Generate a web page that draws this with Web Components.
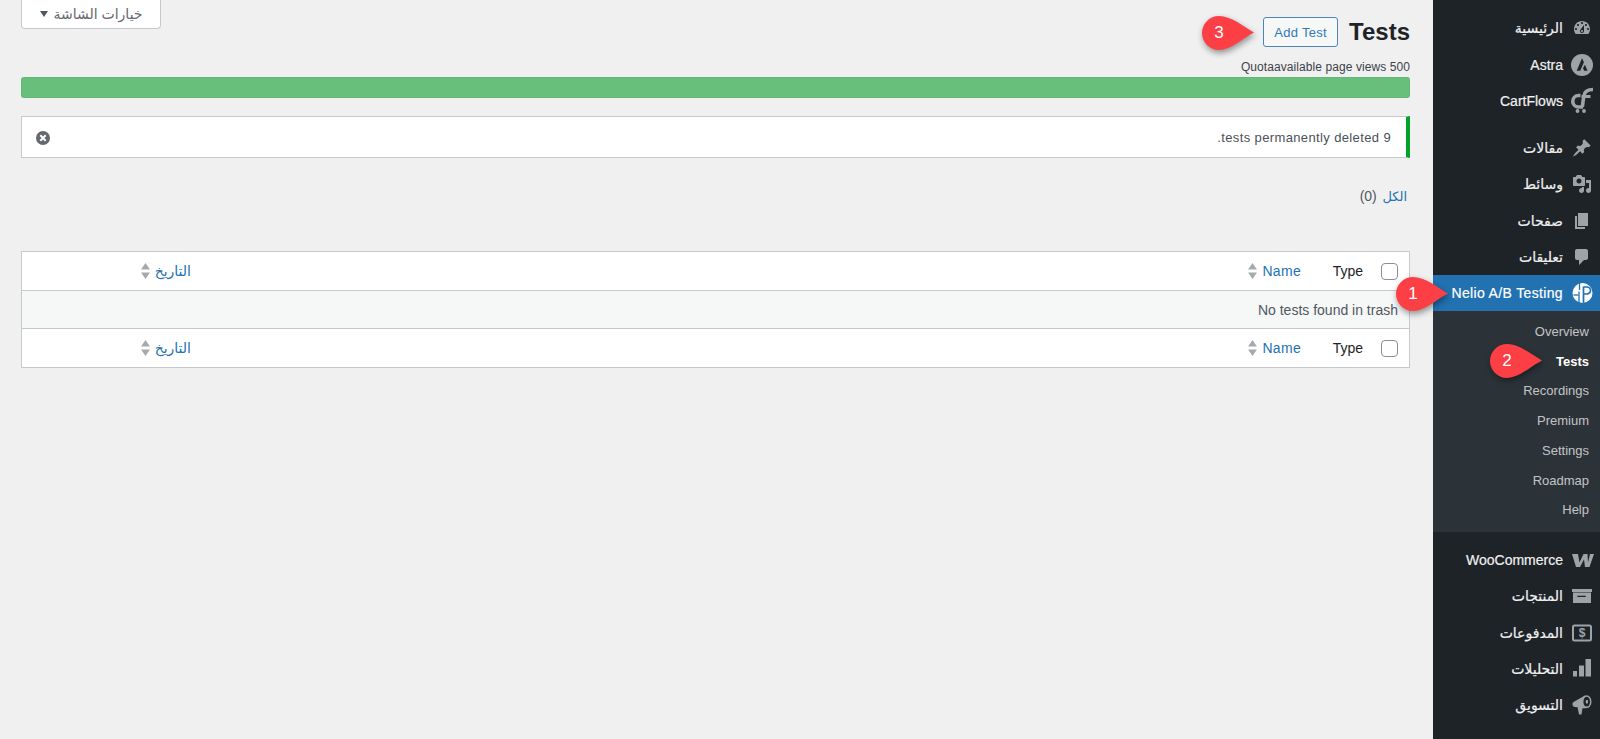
<!DOCTYPE html>
<html lang="ar" dir="rtl">
<head>
<meta charset="utf-8">
<title>Tests</title>
<style>
    html, body { margin: 0; height: 100%; }
    body {
        display: flex;
        min-height: 739px;
        overflow: hidden;
        background: #f0f0f0;
        color: #3c434a;
        font: 13px/1.4 "Liberation Sans", "DejaVu Sans", sans-serif;
    }
</style>
</head>
<body>
<admin-menu></admin-menu>
<tests-page></tests-page>

<script>
const ICONS = {
    dashboard: '<path d="M3.76 16h12.48c1.1-1.37 1.76-3.11 1.76-5 0-4.42-3.58-8-8-8s-8 3.58-8 8c0 1.89.66 3.63 1.76 5zM10 4c.55 0 1 .45 1 1s-.45 1-1 1-1-.45-1-1 .45-1 1-1zM6 6c.55 0 1 .45 1 1s-.45 1-1 1-1-.45-1-1 .45-1 1-1zm8 0c.55 0 1 .45 1 1s-.45 1-1 1-1-.45-1-1 .45-1 1-1zm-5.37 5.55L12 7v6c0 1.1-.9 2-2 2s-2-.9-2-2c0-.57.24-1.08.63-1.45zM4 10c.55 0 1 .45 1 1s-.45 1-1 1-1-.45-1-1 .45-1 1-1zm12 0c.55 0 1 .45 1 1s-.45 1-1 1-1-.45-1-1 .45-1 1-1zm-5 3c0-.55-.45-1-1-1s-1 .45-1 1 .45 1 1 1 1-.45 1-1z"/>',
    astra: '<circle cx="10" cy="10" r="11"/><path fill="#1d2327" d="M10 3.200l1.900 4-3.700 8.500H4.700zM12.900 9.800l2.700 5.900h-3.500l-1.100-2.500z"/>',
    cartflows: '<g fill="none" stroke="currentColor" stroke-width="3.600"><path d="M8.500 4.500H6.500a5.500 5.500 0 0 0 0 11.500H11"/><path d="M21 -1.500C15 -1.500 12.500 .5 11.800 5L10.300 16"/><path d="M9.500 5.500H18.500" stroke-width="3"/></g><circle cx="5.500" cy="20" r="1.900"/><circle cx="12" cy="20" r="1.900"/>',
    pin: '<path d="M10.44 3.02l1.82-1.82 6.36 6.35-1.83 1.82c-1.05-.68-2.48-.57-3.41.36l-.75.75c-.92.93-1.04 2.35-.35 3.41l-1.83 1.82-2.41-2.41-2.8 2.79c-.42.42-3.38 2.71-3.8 2.29s1.86-3.39 2.28-3.81l2.79-2.79L4.1 9.36l1.83-1.82c1.05.69 2.48.57 3.4-.36l.75-.75c.93-.92 1.05-2.35.36-3.41z"/>',
    media: '<path d="M13 11V4c0-.55-.45-1-1-1h-1.670L9 1H5L3.670 3H2c-.55 0-1 .45-1 1v7c0 .55.45 1 1 1h10c.55 0 1-.45 1-1zM7 4.500c1.380 0 2.500 1.120 2.500 2.500S8.380 9.500 7 9.500 4.500 8.380 4.500 7 5.620 4.500 7 4.500zM14 6h5v10.500c0 1.380-1.120 2.500-2.500 2.500S14 17.880 14 16.500s1.120-2.500 2.500-2.500c.17 0 .34.020.5.050V9h-3V6zm-4 8.050V13h2v3.500c0 1.380-1.120 2.500-2.500 2.500S7 17.880 7 16.500 8.120 14 9.500 14c.17 0 .34.020.5.050z"/>',
    pages: '<path d="M6 15V2h10v13H6zm-1 1h8v2H3V5h2v11z"/>',
    comments: '<path d="M5 2h9c1.100 0 2 .9 2 2v7c0 1.100-.9 2-2 2h-2l-5 5v-5H5c-1.100 0-2-.9-2-2V4c0-1.100.9-2 2-2z"/>',
    nelio: '<circle cx="10.500" cy="10" r="10"/><g fill="none" stroke="#2271b1"><path d="M7.500 0V7M7 8.500V20" stroke-width="1.300"/><path d="M1.500 12H6.500" stroke-width="1.300"/><path d="M11.500 4H15a3.500 3.500 0 0 1 0 7H11.500M11.500 3.500V20" stroke-width="1.700"/></g>',
    woo: '<path d="M0 4H6L7.500 12.500 11.500 4H15.500L16 12.500 18 4H22L17.500 17H13L12 9.500 8 17H4Z"/>',
    archive: '<path fill-rule="evenodd" d="M0 3h20v3H0zM1 6.500h18V17H1zM5.300 9.700v1.300h8.400V9.700z"/>',
    payments: '<rect x="1" y="2.500" width="18" height="15" rx="1.500" fill="none" stroke="currentColor" stroke-width="2"/><text x="10" y="14.300" text-anchor="middle" font-size="12" font-weight="700" font-family="Liberation Sans">$</text>',
    bars: '<path d="M19 0v17.500h-5.500V0zM12 6.500v11H7v-11zM5 12v5.500H1V12z"/>',
    megaphone: '<path d="M13 .5L1.500 7Q0 8 .5 10T3 12L5.500 12.300 7 19.500H9.500L10.500 13.200 14 13.200Z"/><ellipse cx="14.500" cy="6.700" rx="5" ry="6.500"/><ellipse cx="14.700" cy="6.700" rx="3.300" ry="4.900" fill="#1d2327"/><ellipse cx="14.900" cy="6.700" rx="1.200" ry="2"/>'
};

class MenuIcon extends HTMLElement {
    constructor() {
        super();
        this.attachShadow({ mode: 'open' });
        const name = this.getAttribute('name');
        this.shadowRoot.innerHTML = `
            <style>
                :host { display: block; width: 20px; height: 20px; color: var(--icon-color, #9ea3a8); }
                svg { display: block; width: 20px; height: 20px; fill: currentColor; overflow: visible; }
            </style>
            <svg viewBox="0 0 20 20">${ICONS[name] || ''}</svg>
        `;
    }
}

class MenuItem extends HTMLElement {
    constructor() {
        super();
        this.attachShadow({ mode: 'open' });
        const icon = this.getAttribute('icon');
        this.shadowRoot.innerHTML = `
            <style>
                :host {
                    display: flex;
                    align-items: center;
                    gap: 9px;
                    height: 36.4px;
                    padding-right: 8px;
                    color: #f0f0f1;
                    font: 14px/1 "Liberation Sans", "DejaVu Sans", sans-serif;
                    -webkit-text-stroke: .2px currentColor;
                }
                :host([active]) {
                    height: 36px;
                    background: #2271b1;
                    color: #fff;
                    letter-spacing: .35px;
                    --icon-color: #fff;
                }
            </style>
            <menu-icon name="${icon}"></menu-icon>
            <slot></slot>
        `;
    }
}

class SubItem extends HTMLElement {
    constructor() {
        super();
        this.attachShadow({ mode: 'open' });
        this.shadowRoot.innerHTML = `
            <style>
                :host {
                    display: flex;
                    align-items: center;
                    height: 29.7px;
                    padding-right: 11px;
                    color: #c3c4c7;
                    font: 13px/1 "Liberation Sans", sans-serif;
                }
                :host([current]) { color: #fff; font-weight: 700; }
            </style>
            <slot></slot>
        `;
    }
}

class AdminMenu extends HTMLElement {
    constructor() {
        super();
        this.attachShadow({ mode: 'open' });
        this.shadowRoot.innerHTML = `
            <style>
                :host {
                    display: block;
                    flex: 0 0 167px;
                    position: relative;
                    padding-top: 10px;
                    box-sizing: border-box;
                    background: #1d2327;
                }
                .sep { height: 10.5px; }
                .sub { padding: 5.5px 0 7px; background: #2c3338; }
                .sep-big { height: 10px; }
            </style>
            <menu-item icon="dashboard">الرئيسية</menu-item>
            <menu-item icon="astra">Astra</menu-item>
            <menu-item icon="cartflows">CartFlows</menu-item>
            <div class="sep"></div>
            <menu-item icon="pin">مقالات</menu-item>
            <menu-item icon="media">وسائط</menu-item>
            <menu-item icon="pages">صفحات</menu-item>
            <menu-item icon="comments">تعليقات</menu-item>
            <menu-item icon="nelio" active>Nelio A/B Testing</menu-item>
            <div class="sub">
                <sub-item>Overview</sub-item>
                <sub-item current>Tests</sub-item>
                <sub-item>Recordings</sub-item>
                <sub-item>Premium</sub-item>
                <sub-item>Settings</sub-item>
                <sub-item>Roadmap</sub-item>
                <sub-item>Help</sub-item>
            </div>
            <div class="sep-big"></div>
            <menu-item icon="woo">WooCommerce</menu-item>
            <menu-item icon="archive">المنتجات</menu-item>
            <menu-item icon="payments">المدفوعات</menu-item>
            <menu-item icon="bars">التحليلات</menu-item>
            <menu-item icon="megaphone">التسويق</menu-item>
        `;
    }
}

class CalloutBadge extends HTMLElement {
    constructor() {
        super();
        this.attachShadow({ mode: 'open' });
        this.shadowRoot.innerHTML = `
            <style>
                :host {
                    position: absolute;
                    display: block;
                    width: 52px;
                    height: 34px;
                    z-index: 5;
                    direction: ltr;
                }
                svg { position: absolute; inset: 0; overflow: visible; filter: drop-shadow(1px 3px 3px rgba(0,0,0,.4)); }
                span {
                    position: absolute;
                    left: 0;
                    top: 0;
                    width: 34px;
                    text-align: center;
                    color: #fff;
                    font: 17px/34px "Liberation Sans", sans-serif;
                }
            </style>
            <svg width="52" height="34" viewBox="0 0 52 34">
                <path fill="#fb3f45" d="M17 0C29 0 41 10 52 16.500C41 22 29 34 17 34A17 17 0 0 1 17 0Z"/>
            </svg>
            <span><slot></slot></span>
        `;
    }
}

class ScreenOptions extends HTMLElement {
    constructor() {
        super();
        this.attachShadow({ mode: 'open' });
        this.shadowRoot.innerHTML = `
            <style>
                :host {
                    display: flex;
                    align-items: center;
                    justify-content: center;
                    gap: 6px;
                    width: 140px;
                    height: 29px;
                    box-sizing: border-box;
                    background: #fff;
                    border: 1px solid #c8c9cc;
                    border-top: 0;
                    border-radius: 0 0 4px 4px;
                    color: #646970;
                    font: 14px/1 "Liberation Sans", "DejaVu Sans", sans-serif;
                }
                i { width: 0; height: 0; border: 4px solid transparent; border-top: 6px solid #50575e; border-bottom: 0; }
            </style>
            <slot></slot><i></i>
        `;
    }
}

class ListRow extends HTMLElement {
    constructor() {
        super();
        this.attachShadow({ mode: 'open' });
        const arrows = `<svg width="9" height="16" viewBox="0 0 9 16"><path fill="#a7aaad" d="M4.500 0L9 6.500H0zM4.500 16L0 9.500h9z"/></svg>`;
        this.shadowRoot.innerHTML = `
            <style>
                :host {
                    display: grid;
                    grid-template-columns: 35px 62px 1fr 169px;
                    align-items: center;
                    height: 38px;
                    padding-right: 11px;
                    background: #fff;
                    font: 14px/1 "Liberation Sans", "DejaVu Sans", sans-serif;
                }
                .box {
                    width: 17px;
                    height: 17px;
                    box-sizing: border-box;
                    border: 1px solid #8c8f94;
                    border-radius: 4px;
                    background: #fff;
                }
                .type { color: #1d2327; }
                .sort { display: flex; align-items: center; gap: 5px; color: #2271b1; }
                .name { letter-spacing: .3px; }
                svg { display: block; }
            </style>
            <div class="box"></div>
            <div class="type">Type</div>
            <div class="sort"><span class="name">Name</span>${arrows}</div>
            <div class="sort"><span>التاريخ</span>${arrows}</div>
        `;
    }
}

class ListTable extends HTMLElement {
    constructor() {
        super();
        this.attachShadow({ mode: 'open' });
        this.shadowRoot.innerHTML = `
            <style>
                :host {
                    display: block;
                    margin-top: 46px;
                    border: 1px solid #c8c9cc;
                    background: #fff;
                }
                .empty {
                    height: 37px;
                    display: flex;
                    align-items: center;
                    padding-right: 11px;
                    background: #f6f7f7;
                    border-top: 1px solid #c8c9cc;
                    border-bottom: 1px solid #c8c9cc;
                    color: #50575e;
                    font: 14px/1 "Liberation Sans", sans-serif;
                }
            </style>
            <list-row></list-row>
            <div class="empty">No tests found in trash</div>
            <list-row></list-row>
        `;
    }
}

class TestsPage extends HTMLElement {
    constructor() {
        super();
        this.attachShadow({ mode: 'open' });
        this.shadowRoot.innerHTML = `
            <style>
                :host {
                    display: block;
                    flex: 1;
                    min-width: 0;
                    padding: 0 23px 0 21px;
                }
                .top { display: flex; justify-content: space-between; align-items: flex-start; height: 47px; }
                .title { display: flex; align-items: center; gap: 11px; padding-top: 17px; height: 30px; }
                h1 { margin: 0; font: 700 24px/30px "Liberation Sans", sans-serif; color: #1d2327; }
                .add {
                    width: 75px;
                    height: 30px;
                    box-sizing: border-box;
                    display: flex;
                    align-items: center;
                    justify-content: center;
                    border: 1px solid #4a85bd;
                    border-radius: 3px;
                    background: #f6f7f7;
                    color: #3179b6;
                    font: 13px/1 "Liberation Sans", sans-serif;
                    letter-spacing: .3px;
                }
                .quota { margin-top: 13px; direction: ltr; text-align: right; font: 12px/14px "Liberation Sans", sans-serif; letter-spacing: .08px; color: #3c434a; }
                .bar { height: 21px; margin-top: 3px; background: #68be7b; border-radius: 3px; box-shadow: inset 0 0 0 1px rgba(0,0,0,.03); }
                .notice {
                    display: flex;
                    align-items: center;
                    justify-content: space-between;
                    height: 42px;
                    margin-top: 18px;
                    box-sizing: border-box;
                    padding: 1px 15px 0 14px;
                    background: #fff;
                    border: 1px solid #c8c9cc;
                    border-right: 4px solid #00a32a;
                    font: 13px/1 "Liberation Sans", sans-serif;
                    letter-spacing: .37px;
                    color: #4a5159;
                }
                .notice svg { display: block; }
                .tabs { margin-top: 30px; padding-right: 3px; height: 17px; font: 13px/17px "Liberation Sans", "DejaVu Sans", sans-serif; color: #50575e; }
                .tabs a { color: #2271b1; text-decoration: none; margin-left: 2px; }
                .tabs span { font-size: 14px; }
            </style>
            <div class="top">
                <div class="title">
                    <h1>Tests</h1>
                    <div class="add">Add Test</div>
                </div>
                <screen-options>خيارات الشاشة</screen-options>
            </div>
            <div class="quota">Quotaavailable page views 500</div>
            <div class="bar"></div>
            <div class="notice">
                <span>9 tests permanently deleted.</span>
                <svg width="14" height="14" viewBox="0 0 14 14"><circle cx="7" cy="7" r="7" fill="#646970"/><path d="M4.300 4.300l5.400 5.400M9.700 4.300l-5.400 5.400" stroke="#fff" stroke-width="2"/></svg>
            </div>
            <div class="tabs"><a>الكل</a> <span>(0)</span></div>
            <list-table></list-table>
            <callout-badge style="left:1202px;top:16px">3</callout-badge>
            <callout-badge style="left:1396px;top:277px">1</callout-badge>
            <callout-badge style="left:1490px;top:344px">2</callout-badge>
        `;
    }
}

customElements.define('menu-icon', MenuIcon);
customElements.define('menu-item', MenuItem);
customElements.define('sub-item', SubItem);
customElements.define('admin-menu', AdminMenu);
customElements.define('callout-badge', CalloutBadge);
customElements.define('screen-options', ScreenOptions);
customElements.define('list-row', ListRow);
customElements.define('list-table', ListTable);
customElements.define('tests-page', TestsPage);
</script>
</body>
</html>
